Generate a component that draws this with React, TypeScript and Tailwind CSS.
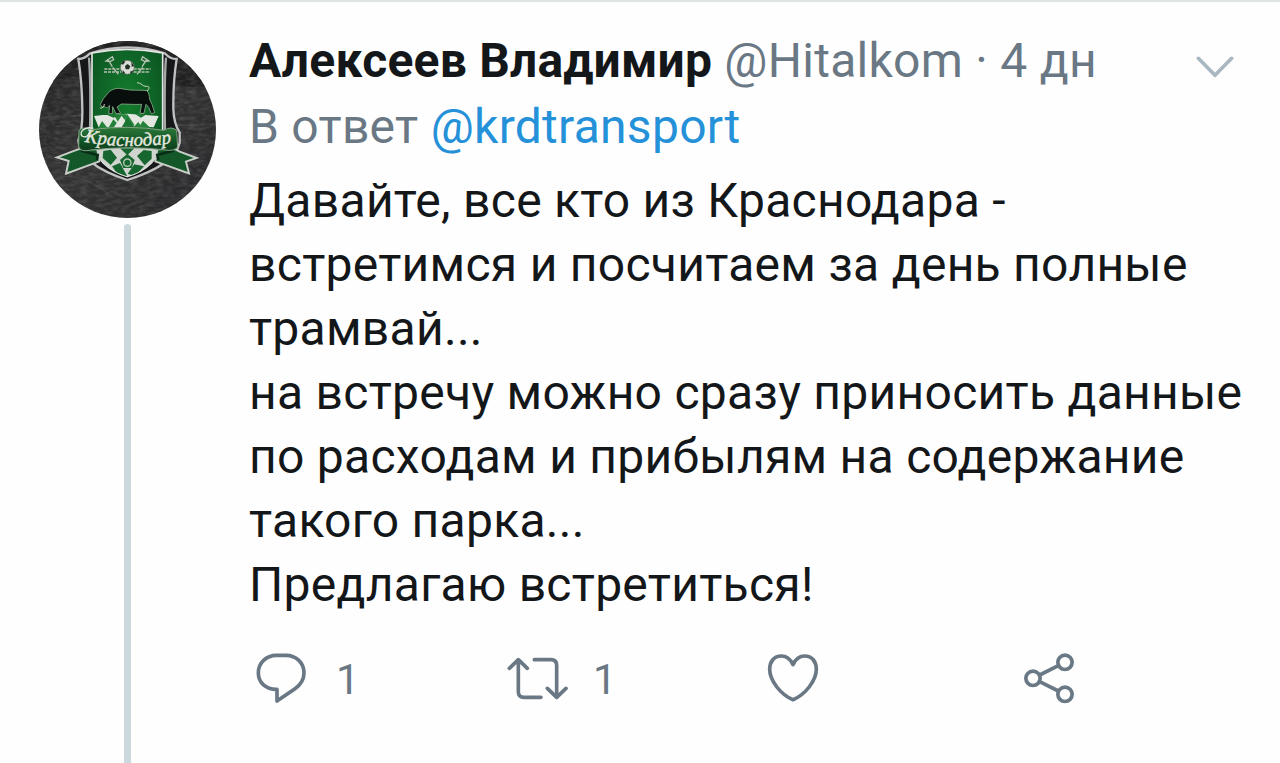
import React from 'react';
import clsx from 'clsx';

const tweet = {
    name: 'Алексеев Владимир',
    handle: '@Hitalkom',
    time: '4 дн',
    replyTo: '@krdtransport',
    lines: [
        'Давайте, все кто из Краснодара -',
        'встретимся и посчитаем за день полные',
        'трамвай...',
        'на встречу можно сразу приносить данные',
        'по расходам и прибылям на содержание',
        'такого парка...',
        'Предлагаю встретиться!',
    ],
};

// --- Icons ---

const iconStroke = { fill: 'none', stroke: 'currentColor', strokeWidth: 11, strokeLinecap: 'round', strokeLinejoin: 'round' } as const;

const ReplyIcon = () => (
    <svg viewBox="0 0 156 156" className="w-[52px] h-[52px]" {...iconStroke}>
        <path d="M64 10H93C124 10 147 33 147 63C147 84 137 98 120 110L66 147V112C33 113 10 92 10 62C10 33 34 10 64 10Z" />
    </svg>
);

const RetweetIcon = () => (
    <svg viewBox="0 0 183 132" className="mt-[4px] w-[61px] h-[44px]" {...iconStroke}>
        <path d="M7 37L34 11L61 37M34 13V107Q34 124 51 124H102M82 11H132Q149 11 149 28V122M121 97L149 124L177 97" />
    </svg>
);

const HeartIcon = () => (
    <svg viewBox="0 0 156 150" className="mt-[1px] w-[52px] h-[50px]" {...iconStroke}>
        <path d="M78 35C70 17 57 9 43 9C21 9 8 26 8 49C8 83 42 126 78 140C114 126 148 83 148 49C148 26 135 9 113 9C99 9 86 17 78 35Z" />
    </svg>
);

const ShareIcon = () => (
    <svg viewBox="0 0 156 156" className="w-[52px] h-[52px]" {...iconStroke}>
        <circle cx="30" cy="79" r="21.5" />
        <circle cx="126" cy="31" r="21.5" />
        <circle cx="126" cy="127" r="21.5" />
        <path d="M50 69L106 41M50 89L106 117" />
    </svg>
);

const ChevronIcon = () => (
    <svg viewBox="0 0 114 72" className="w-[38px] h-[24px]" {...iconStroke}>
        <path d="M7 7L57 58L107 7" />
    </svg>
);

// --- Avatar with the club crest ---

const Avatar = () => (
    <svg viewBox="27 32 531 531" className="w-[177px] h-[177px] shrink-0">
        <defs>
            <linearGradient id="leather" x1="0" y1="0" x2="1" y2="1">
                <stop offset="0" stopColor="#222223" />
                <stop offset=".45" stopColor="#333334" />
                <stop offset="1" stopColor="#28282a" />
            </linearGradient>
            <radialGradient id="field" cx=".5" cy=".4" r=".65">
                <stop offset="0" stopColor="#147d2d" />
                <stop offset="1" stopColor="#0b5222" />
            </radialGradient>
            <linearGradient id="ribbon" x1="0" y1="0" x2="0" y2="1">
                <stop offset="0" stopColor="#2c7939" />
                <stop offset=".6" stopColor="#115326" />
                <stop offset="1" stopColor="#0d3e1d" />
            </linearGradient>
            <filter id="grain" x="0" y="0" width="1" height="1">
                <feTurbulence type="fractalNoise" baseFrequency=".04 .1" numOctaves="3" seed="4" />
                <feColorMatrix values="0 0 0 0 1  0 0 0 0 1  0 0 0 0 1  .25 0 0 0 -.09" />
            </filter>
            <clipPath id="round"><circle cx="292.5" cy="297.5" r="265.5" /></clipPath>
            <clipPath id="shield"><path d="M186 68Q292 46 398 68V318C398 384 343 424 292 438C241 424 186 384 186 318Z" /></clipPath>
            <path id="script" d="M164 334C240 350 335 351 428 338" />
        </defs>

        <g clipPath="url(#round)">
            <path fill="url(#leather)" d="M27 32H558V563H27Z" />
            <path fill="#202021" d="M27 32H558V165Q455 180 300 145Q145 110 27 170Z" />
            <path d="M27 263Q180 246 310 270T558 280M60 455Q125 410 235 490" fill="none" stroke="#505050" strokeWidth="4" opacity=".5" />
            <rect x="27" y="32" width="531" height="531" filter="url(#grain)" />

            {/* outer shield and its side stripes */}
            <path d="M145 86Q164 86 179 70Q292 32 406 70Q420 86 440 86Q429 154 430 235Q431 278 449 307V337C437 392 365 425 292 449C220 425 148 387 145 330Q158 303 157 235Q156 152 145 86Z" fill="#151719" stroke="#bfc2c1" strokeWidth="7" />
            <path d="M177 82Q183 166 180 300M408 82Q402 166 405 300" fill="none" stroke="#a3a8a7" strokeWidth="7" />
            <path d="M186 68Q292 46 398 68V318C398 384 343 424 292 438C241 424 186 384 186 318Z" fill="url(#field)" stroke="#e4e7e3" strokeWidth="5" />
            <g clipPath="url(#shield)">
                <path d="M192 257L218 254L250 254L291 250L334 253L386 257L371 291Q292 284 207 293Z" fill="#e2e7df" />
                <path d="M235 293L250 267L275 293ZM275 293L250 252H291ZM292 252L275 285L292 293L314 285ZM311 291L333 265L361 293ZM205 293L216 272L233 293Z" fill="#24823b" />
                <path d="M250 293L275 256L300 291ZM311 254H350L331 284Z" fill="#e2e7df" />
                <path d="M275 291L291 263L312 291ZM232 254H268L250 262ZM316 252H350L333 262Z" fill="#1c7433" />
                <path d="M190 350H396V440H190Z" fill="#cfd5ce" />
                <path d="M220 362L242 358L261 382L242 404L218 383ZM270 354H313L292 375ZM321 377L341 359L365 362V385L344 405ZM292 370L314 389L305 413H280L270 389ZM246 408L270 398L292 438L265 435ZM313 402L342 408L315 438L293 430Z" fill="#176630" />
                <circle cx="292" cy="397" r="11" fill="none" stroke="#b6cbb6" strokeWidth="4" />
            </g>

            {/* ball with the hammers on both sides */}
            <g stroke="#b8c1b2" strokeWidth="4" fill="none">
                <path d="M223 116H275M222 125H273M311 116H362M311 125H360" strokeDasharray="9 3" />
                <path d="M233 86L247 109M352 86L336 109M228 92L247 79L251 88L240 94ZM357 92L338 79L334 88L345 94ZM248 111L265 132M338 111L321 132" />
            </g>
            <circle cx="292" cy="111" r="21" fill="#d7dcd4" stroke="#566056" strokeWidth="2" />
            <path d="M285 107L293 101L301 108L297 117H287ZM273 100L281 92L286 94L279 103ZM304 94L313 108L305 109ZM278 119L286 129L279 130ZM300 124L311 120L303 131Z" fill="#252c28" />

            {/* bull */}
            <path d="M236 186C248 174 264 172 279 176C304 182 332 178 351 181C356 187 358 196 359 207L366 222L374 247L364 250L356 231L348 222L342 249H330L335 222C312 223 289 221 274 221L261 230L272 249L258 250L248 229L247 250H236L239 225C235 231 230 235 225 229L216 230L211 222L220 205Z" fill="#080e0b" stroke="#8ba98b" strokeWidth="2.5" />
            <path d="M210 233Q222 234 223 221M351 182C360 174 359 167 348 168C337 169 335 157 321 157" fill="none" stroke="#cbd4bd" strokeWidth="3" />

            {/* ribbon */}
            <path d="M151 355L134 361L81 381L116 392L108 430L208 393L202 357ZM432 355L449 364L500 383L468 394L477 429L376 393L382 357Z" fill="#14582a" stroke="#c8cdc8" strokeWidth="6" />
            <path d="M153 361L203 374L201 389M430 361L382 374L385 389" fill="none" stroke="#082d17" strokeWidth="8" />
            <path d="M147 300Q160 287 183 298Q293 283 402 300Q424 286 440 300L443 350Q431 365 401 358Q292 346 183 359Q150 367 146 348Z" fill="url(#ribbon)" stroke="#84a284" strokeWidth="3" />
            <text fill="#e3e6de" stroke="#e3e6de" strokeWidth="1.4" className="font-['Liberation_Serif',serif] italic text-[57px]">
                <textPath href="#script" textLength="262" lengthAdjust="spacingAndGlyphs">Краснодар</textPath>
            </text>
            <path d="M190 294C165 287 146 304 156 317Q172 326 180 303" fill="none" stroke="#e3e6de" strokeWidth="4" />
        </g>
    </svg>
);

const Action = ({ icon: Icon, count, className }: { icon: React.ComponentType; count?: number; className?: string }) => (
    <button className={clsx('flex items-start', className)}>
        <Icon />
        {count !== undefined && <span className="pt-[4px] text-[42px] leading-[48px]">{count}</span>}
    </button>
);

const App = () => {
    return (
        <article className="flex w-[1280px] h-[763px] overflow-hidden bg-[#fefefe] border-t-2 border-[#dfe5e5] font-['Roboto',sans-serif] text-5xl tracking-[0.28px] text-[#14171a]">
            {/* Avatar and thread line */}
            <div className="w-[249px] pl-[39px] pt-[39px] shrink-0 flex flex-col">
                <Avatar />
                <div className="ml-[85px] mt-[6px] w-[7px] flex-1 rounded-t-full bg-[#ccd9dc]" />
            </div>

            <div className="flex-1 pt-[27px]">
                <header className="flex h-[66px] pr-[46px] justify-between whitespace-pre leading-[64px] text-[#697884]">
                    <div>
                        <span className="font-bold tracking-[0.2px] text-[#14171a]">{tweet.name}</span>
                        {' '}{tweet.handle} · {tweet.time}
                    </div>
                    <button className="self-start mt-[27px] text-[#a9b7c1]">
                        <ChevronIcon />
                    </button>
                </header>

                <div className="h-[74px] leading-[64px] text-[#697884]">
                    В ответ <span className="text-[#2491d9]">{tweet.replyTo}</span>
                </div>

                <div className="leading-[64px] whitespace-nowrap">
                    {tweet.lines.map((line) => (
                        <p key={line}>{line}</p>
                    ))}
                </div>

                <footer className="flex items-start pt-[35px] text-[#697884]">
                    <Action icon={ReplyIcon} count={1} className="w-[258px] pl-[6px] gap-[29px]" />
                    <Action icon={RetweetIcon} count={1} className="w-[260px] gap-[25px]" />
                    <Action icon={HeartIcon} className="w-[256px]" />
                    <Action icon={ShareIcon} />
                </footer>
            </div>
        </article>
    );
};

export default App;
